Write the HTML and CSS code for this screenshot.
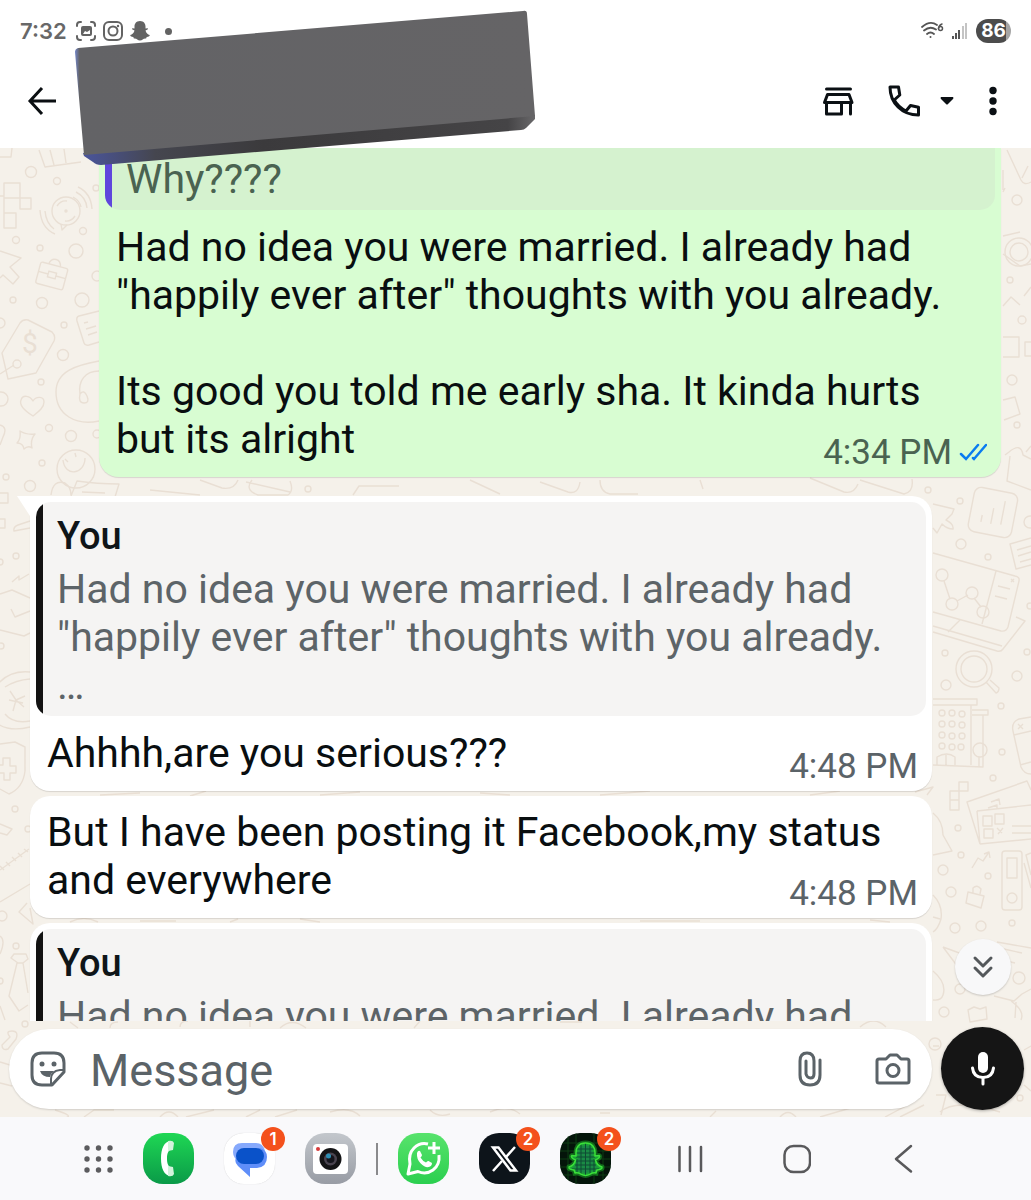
FILE: index.html
```html
<!DOCTYPE html>
<html lang="en">
<head>
    <meta charset="UTF-8">
    <meta name="viewport" content="width=device-width, initial-scale=1.0">
    <title>Chat</title>
    <link rel="stylesheet" href="styles.css">
</head>
<body>
    <header class="header">
        <div class="status-bar">
            <span class="clock">7:32</span>
            <div class="status-left">
                <svg width="22" height="22" viewBox="0 0 22 22" fill="none" stroke="#636363" stroke-width="2" stroke-linecap="round">
                    <path d="M2 6V5q0-3 3-3h1M16 2h1q3 0 3 3v1M20 16v1q0 3-3 3h-1M6 20H5q-3 0-3-3v-1"/>
                    <rect x="6" y="6" width="11" height="10" rx="2" fill="#636363" stroke="none"/>
                    <path d="M8 14l2-3 2 1 3-2v4z" fill="#fff" stroke="none"/>
                </svg>
                <svg width="22" height="22" viewBox="0 0 22 22" fill="none" stroke="#636363" stroke-width="2">
                    <rect x="2" y="2" width="18" height="18" rx="5"/>
                    <circle cx="11" cy="11" r="4.5"/>
                    <circle cx="16" cy="6" r="1.2" fill="#636363" stroke="none"/>
                </svg>
                <svg width="22" height="22" viewBox="0 0 22 22" fill="#636363">
                    <path d="M11 1c4 0 5.500 3 5.500 5.500v2l2-.3c1 .3.600 1.300-2 2.300.6 2.500 2.300 4 4.200 4.500.5.800-1 1.700-3 2l-.6 1.600c-3-.4-3.500 1.900-6.100 1.900s-3.100-2.300-6.100-1.900L4.300 17c-2-.3-3.500-1.200-3-2 1.900-.5 3.600-2 4.200-4.500-2.600-1-3-2-2-2.300l2 .3v-2C5.500 4 7 1 11 1z"/>
                </svg>
                <span class="more-dot"></span>
            </div>
            <div class="status-right">
                <svg width="24" height="20" viewBox="0 0 24 20" fill="none" stroke="#555" stroke-width="1.8" stroke-linecap="round">
                    <path d="M2 6q8-7 15-2M4 9.500q6-5 12-1M7 13q3.500-3 7 0"/>
                    <circle cx="10.500" cy="16" r="1" fill="#555" stroke="none"/>
                    <path d="M22 3q-3 1-3.500 4.500" stroke-width="1.500"/>
                    <circle cx="20.500" cy="7.500" r="2" stroke-width="1.500"/>
                </svg>
                <svg width="16" height="18" viewBox="0 0 16 18" fill="#555">
                    <rect x="0" y="14" width="2" height="3"/>
                    <rect x="3" y="11" width="2" height="6"/>
                    <rect x="6" y="8" width="2" height="9"/>
                    <rect x="10" y="4" width="2" height="13" fill="#c4c4c4"/>
                    <rect x="13" y="1" width="2" height="16" fill="#c4c4c4"/>
                </svg>
                <span class="battery">86</span>
            </div>
        </div>
        <div class="toolbar">
            <button class="icon-btn" aria-label="Back">
                <svg width="30" height="30" viewBox="0 0 30 30" fill="none" stroke="#0b0f12" stroke-width="3">
                    <path d="M29 15H4M15 2L3 15l12 13"/>
                </svg>
            </button>
            <div class="toolbar-actions">
                <button class="icon-btn" aria-label="Catalogue">
                    <svg width="32" height="32" viewBox="0 0 32 32" fill="none" stroke="#0b1014" stroke-width="3" stroke-linecap="round" stroke-linejoin="round">
                        <path d="M4.500 4h24M5.500 9.500h21.500l3 8H2.500zM4.500 18v11h15V18M28.500 18v11"/>
                    </svg>
                </button>
                <div class="call-group">
                    <button class="icon-btn" aria-label="Call">
                        <svg width="32" height="32" viewBox="0 0 32 32" fill="none" stroke="#0b1014" stroke-width="3" stroke-linejoin="round">
                            <path d="M2 2h8.500l1.300 8-5.600 5C9 20 13 23.500 18 26l4.500-5.500 8 1.700V30C14 30 2 18 2 2z"/>
                        </svg>
                    </button>
                    <button class="icon-btn" aria-label="Call options">
                        <svg width="16" height="12" viewBox="0 0 16 12"><path d="M2 2h12q1 1 0 2l-5 5q-1 1-2 0L2 4Q1 3 2 2z" fill="#0b1014"/></svg>
                    </button>
                </div>
                <button class="icon-btn" aria-label="Menu">
                    <svg width="8" height="30" viewBox="0 0 8 30" fill="#0b1014">
                        <circle cx="4" cy="4.500" r="3.700"/><circle cx="4" cy="15" r="3.700"/><circle cx="4" cy="25.500" r="3.700"/>
                    </svg>
                </button>
            </div>
        </div>
        <svg class="cover" width="470" height="160" viewBox="70 8 470 160">
            <defs>
                <linearGradient id="side" x1="0" x2="1" y1="0" y2="0">
                    <stop offset="0" stop-color="#4a559c"/>
                    <stop offset=".16" stop-color="#45464f"/>
                    <stop offset=".4" stop-color="#3b3a3c"/>
                    <stop offset=".94" stop-color="#454446"/>
                    <stop offset="1" stop-color="#69686a"/>
                </linearGradient>
                <linearGradient id="face" x1="0" x2="1" y1="0" y2="0">
                    <stop offset="0" stop-color="#7286c8"/>
                    <stop offset=".01" stop-color="#636366"/>
                    <stop offset="1" stop-color="#656466"/>
                </linearGradient>
            </defs>
            <path d="M83 153l452-38v4l-9 9q-2 2-5 2L101 165q-5 0-8-3l-9-6z" fill="url(#side)"/>
            <path d="M78 48L523 11q4-1 4 3l8 102L84 155 75 52q0-3 3-4z" fill="url(#face)"/>
        </svg>
    </header>

    <main class="chat">
        <svg class="wallpaper" viewBox="0 148 1031 969" preserveAspectRatio="xMidYMin slice" aria-hidden="true">
            <!-- left side -->
            <path d="M0 157h11l1-9M39 150l6 17 36-5M50 150l4 15M64 149l2 14M4 183h16v15h11v11H20v-11H4zM4 198v15h12v15H4zM0 196h4"/>
            <circle cx="66" cy="211" r="14"/><circle cx="66" cy="211" r="1"/>
            <path d="M57 206q4-6 10-5M75 216q-4 6-10 5M61 224l1 6 5-5M78 187q13 6 14 22M76 192q10 5 11 16M73 197q7 4 8 10M40 210q1 18 15 24M45 211q1 12 9 18"/>
            <path d="M0 251l21 7-11 9 9 10-6 7-10-9-3 3"/>
            <g transform="rotate(15 52 275)"><rect x="38" y="265" width="28" height="22" rx="2"/><path d="M46 265q1-6 6-6t6 6M38 275h10M56 275h10"/><rect x="48" y="272" width="8" height="6"/></g>
            <path d="M28 320l24 12q4 4 2 9l-18 32-28 6-6-26 18-30q3-4 8-3zM0 374l14-9"/>
            <circle cx="17" cy="364" r="4"/>
            <text x="22" y="353">$</text>
            <path d="M99 311l-20 5q-3 1-2 5l7 22q1 3 5 2l10-3M84 323l4-1M86 329l10-3M88 335l9-3"/>
            <path d="M99 361c-22 4-43 10-43 31 0 23 20 34 43 29M99 371c-14 0-21 10-19 23M80 394q4-5 7 2t-3 7-4-9"/>
            <path d="M33 416c-8-5-14-11-12-16 2-6 9-4 12 1 3-5 11-5 11 1s-6 10-11 14z"/>
            <path d="M20 431q6 4 15 3-5 6-3 14-4-3-8 1-1-6-7-6 4-4 3-12zM0 425q8 2 3 12l-3 8"/>
            <circle cx="76" cy="469" r="19"/><path d="M63 460c2 18 22 14 22-2M65 459l3 3M75 453l1 4"/>
            <path d="M51 495q2-16 14-12 6 4 6 12M71 496l6-15q20 3 42 3l-4 13M82 492l23 1M0 493h8v10H0M0 519h5v9H0M30 521l-12 4q-5 2-4 6l16-3"/>
            <path d="M12 582l7-6v4l10-6M0 594l12-4 18 8M11 609l4 8 15-6M0 630l24 6 6-3"/>
            <path d="M30 672Q10 670-2 684M-2 724q12 8 32 3M30 679Q16 680 5 687M5 714q8 10 25 7M10 691l6 9 9-4M16 700l-3 11M16 700l8 7M9 700l14 3"/>
            <path d="M0 744l15-2 10 5v24q-2 17-16 23l-9-5M0 765h3v-7h7v8h6v7h-6v7H4v-7H0"/>
            <path d="M0 824l12 5-5 6-7-2M0 870l29-21M0 902l30-18M0 866l4 4M6 862l4 4M12 857l4 4M18 853l4 4M24 849l4 3M27 903l-8 9 14 12-3-16M11 958l3-4h12l2 5-5 4h-5zM17 963l-8 33 10 15 9-6M23 963l5 30M0 1006l5 14M0 936q6 4 0 18M10 1037q-5-6 2-6t4 8l-8 10q-6 2-6-4zM0 1062l10 3M0 1083l12 3"/>
            <!-- gaps between bubbles -->
            <path d="M150 490l50 5M200 480l22 8q12 2 16-8M246 482l44 10M252 480q-8 10 6 15h30q6-4 2-14M353 495l6-9h40M470 480l30 14M540 482l28 10q10 3 12-10M600 480q0 12 10 14h28M810 478l34 14q10 2 14-8M860 480l44 14q10-2 8-15M700 480l3 9"/>
            <path d="M100 795l40-2M190 796l16-5M320 795l40-3M480 793l30 2M600 795l50-4M810 795l30-4M915 792l18-5-6 8M70 922q14-7 28 0M140 921h36M230 922l8-3M300 919l20 3M640 921h60M870 920l20 2"/>
            <path d="M70 1022l8 6M110 1028q0-6 8-6M180 1027q0-6 8-6M250 1021v6M280 1028q12-11 26 0M420 1021l-6 7M560 1022h22M860 1027q14-12 26 0"/>
            <path d="M55 1110q20 6 10 8M84 1117l10-7h20M186 1117l28-7M160 1117q9-10 18 0M260 1110l-14 7M275 1117l22-7M330 1112q20-6 30 4M430 1110q8 8 20 4M490 1112q18-8 30 2M600 1113h10M710 1117l6-6M780 1117q8-9 16 0M820 1117l34-10M885 1117l30-16M900 1117l24-12M940 1112q16-14 60 0"/>
            <!-- right side -->
            <path d="M1007 150l14 30q3 6 10 2M1022 178l6-12M1003 170v20M1005 188l-2 4M1003 236l17-4M1003 254l17 12 11-2M1024 296l7-9M1003 306l8-9 9 8M1003 337h16v20h-16M1031 342h-6v14h6M1003 400l12-3 5 17-16 6M1005 455l4-3q12-10 14 3l8 4M1010 456l-3 25 24 9M1031 446l-5 6"/>
            <circle cx="1019" cy="252" r="14"/><circle cx="1019" cy="252" r="9"/>
            <path d="M933 504l21 5-2 5-6 6q8 4 7 9-6 0-11-5l-5 9-4-5"/>
            <g transform="rotate(11 993 512)"><rect x="971" y="490" width="44" height="45" rx="7"/><path d="M983 517v7M993 508v16M1003 499v24"/></g>
            <path d="M1031 538l-21 6 6 25 15-4M1017 550l14-4M1018 556l13-4M1020 562l11-3"/>
            <path d="M933 553l82 23q5 1 4 5l-11 46q-2 5-7 4L933 612M996 571l-14 53M998 586l12 3M995 596l12 3M1011 579l3 3M1014 579l-3 3M1016 617l9 4-22 28q-2 3-6 2L933 632M1002 646L933 626M960 620l-12 12"/>
            <path d="M944 581l6 18M957 601l11-6M974 598l7 9"/>
            <path d="M986 682l10 11q3-1 3-5l-9-8"/>
            <circle cx="974" cy="669" r="18"/><circle cx="974" cy="669" r="13"/>
            <path d="M933 699h44v6h-44M971 705v60M933 765l50 2v-52M972 710h16v5h-16M937 765v-8q10-6 18 0v8M946 755v10M979 757v10"/>
            <g>
                <circle cx="942" cy="713" r="3"/><circle cx="952" cy="713" r="3"/><circle cx="962" cy="714" r="3"/>
                <circle cx="942" cy="724" r="3"/><circle cx="952" cy="724" r="3"/><circle cx="962" cy="725" r="3"/>
                <circle cx="942" cy="735" r="3"/><circle cx="952" cy="736" r="3"/><circle cx="962" cy="736" r="3"/>
                <circle cx="942" cy="746" r="3"/><circle cx="952" cy="747" r="3"/><circle cx="961" cy="747" r="3"/>
                <circle cx="980" cy="750" r="7"/>
            </g>
            <path d="M1031 717l-12 2q-8 3-6 12l8 36q3 7 10 7M1014 735l17-4M1020 765l11-3M1018 724l5 5M1023 724l-5 5"/>
            <path d="M959 782h9v9h-9zM950 791h9v9h-9zM950 800h9v10h-9z"/>
            <path d="M980 844l-13-42 60-21 4 9M980 844l51-5M977 811l54-6M977 811l3 33M983 816h9v10h-9zM995 814h9v10h-9zM984 829h9v9h-9zM997 828l5 5M1003 828l-5 6M1012 826h19M1012 833h19M988 808l9-3v5M991 802l8-3 1 6"/>
            <path d="M933 813q10 8 10 22l9 16-19 4M972 868l6-10 5 3 6-9M984 854l5-2 1 6"/>
            <rect x="1002" y="851" width="20" height="59" rx="3"/><rect x="1007" y="858" width="10" height="20"/><circle cx="1012" cy="898" r="5"/>
            <path d="M1031 853l-5 2 5 20M1024 863l7 25"/>
            <path d="M968 892l16 4-3 12-15-5zM973 893v-5q4-4 8 1l-1 5M933 895q10 10 8 24-3 10-8 13M933 917l7 2M943 947l30 11M943 947l18 24 12 16M997 942l34 6M1004 949l18 4M1003 960l12 3M994 996l20 5 8-7 9-5M1011 1001q14 10 10 19M1016 1002l-1 16M933 971q14 12 10 24-2 6-10 5M968 1010l6-3 6 2 6-2 1 12-17 3z"/>
            <path d="M933 1046h6M1024 1050l7-4M936 1095h10l-5 20M1024 1085l7 6"/>
            <!-- loose bubbles -->
            <g>
                <circle cx="31" cy="172" r="5.500"/><circle cx="57" cy="181" r="3.500"/><circle cx="96" cy="188" r="3"/>
                <circle cx="83" cy="231" r="3.500"/><circle cx="16" cy="240" r="3.500"/><circle cx="40" cy="248" r="3"/>
                <circle cx="76" cy="251" r="7"/><circle cx="13" cy="300" r="3"/><circle cx="42" cy="303" r="5.500"/>
                <circle cx="82" cy="300" r="7"/><circle cx="64" cy="325" r="3"/><circle cx="63" cy="355" r="5.500"/>
                <circle cx="97" cy="276" r="5"/><circle cx="0" cy="323" r="5"/><circle cx="41" cy="382" r="3"/>
                <circle cx="1" cy="399" r="7"/><circle cx="49" cy="428" r="3.500"/><circle cx="71" cy="436" r="5.500"/>
                <circle cx="97" cy="434" r="4"/><circle cx="42" cy="463" r="3"/><circle cx="6" cy="477" r="3"/>
                <circle cx="30" cy="486" r="5.500"/><circle cx="308" cy="489" r="3"/><circle cx="0" cy="562" r="3"/>
                <circle cx="16" cy="556" r="3"/><circle cx="1" cy="646" r="3"/><circle cx="15" cy="809" r="3"/>
                <circle cx="28" cy="829" r="3"/><circle cx="2" cy="916" r="5"/><circle cx="16" cy="946" r="3"/>
                <circle cx="0" cy="981" r="3"/><circle cx="25" cy="1024" r="3"/>
                <circle cx="1017" cy="200" r="5"/><circle cx="1010" cy="280" r="3"/><circle cx="1022" cy="320" r="4"/>
                <circle cx="1012" cy="380" r="5"/><circle cx="1017" cy="425" r="3"/><circle cx="928" cy="490" r="3"/>
                <circle cx="960" cy="501" r="3"/><circle cx="961" cy="544" r="5"/><circle cx="988" cy="557" r="3"/>
                <circle cx="942" cy="575" r="6"/><circle cx="952" cy="604" r="6"/><circle cx="972" cy="593" r="6"/>
                <circle cx="983" cy="612" r="6"/><circle cx="1030" cy="522" r="6"/><circle cx="1030" cy="606" r="3"/>
                <circle cx="945" cy="653" r="3"/><circle cx="1027" cy="652" r="3"/><circle cx="1017" cy="676" r="5"/>
                <circle cx="946" cy="685" r="5"/><circle cx="1001" cy="706" r="3"/><circle cx="1002" cy="752" r="3"/>
                <circle cx="993" cy="778" r="3"/><circle cx="958" cy="828" r="3"/><circle cx="961" cy="855" r="3"/>
                <circle cx="943" cy="870" r="5"/><circle cx="988" cy="876" r="3"/><circle cx="951" cy="892" r="5"/>
                <circle cx="955" cy="928" r="5"/><circle cx="981" cy="926" r="5"/><circle cx="1012" cy="923" r="3"/>
                <circle cx="1019" cy="978" r="6"/><circle cx="960" cy="989" r="5"/><circle cx="944" cy="1012" r="5"/>
                <circle cx="935" cy="1044" r="6"/><circle cx="1020" cy="1098" r="3"/>
            </g>
        </svg>

        <div class="thread">
            <div class="bubble sent">
                <div class="quote">
                    <p class="quote-text">Why????</p>
                </div>
                <div class="bubble-body">
                    <p class="text">Had no idea you were married. I already had<br>"happily ever after" thoughts with you already.<br><br>Its good you told me early sha. It kinda hurts<br>but its alright</p>
                    <div class="meta">
                        <span>4:34 PM</span>
                        <svg width="28" height="20" viewBox="0 0 28 20" fill="none" stroke="#0a7cf0" stroke-width="2.500" stroke-linecap="round">
                            <path d="M2 11l5 5L19 2M14 15l1 1L27 2"/>
                        </svg>
                    </div>
                </div>
            </div>

            <div class="bubble received quoted with-tail">
                <div class="quote">
                    <p class="quote-name">You</p>
                    <p class="quote-text">Had no idea you were married. I already had<br>"happily ever after" thoughts with you already.<br>…</p>
                </div>
                <div class="bubble-body">
                    <p class="text">Ahhhh,are you serious???</p>
                    <div class="meta"><span>4:48 PM</span></div>
                </div>
            </div>

            <div class="bubble received">
                <div class="bubble-body">
                    <p class="text">But I have been posting it Facebook,my status<br>and everywhere</p>
                    <div class="meta"><span>4:48 PM</span></div>
                </div>
            </div>

            <div class="bubble received quoted">
                <div class="quote">
                    <p class="quote-name">You</p>
                    <p class="quote-text">Had no idea you were married. I already had</p>
                </div>
            </div>
        </div>

        <button class="scroll-down" aria-label="Scroll to bottom">
            <svg width="22" height="26" viewBox="0 0 22 26" fill="none" stroke="#54585b" stroke-width="3" stroke-linecap="round" stroke-linejoin="round">
                <path d="M3 4l8 8 8-8M3 14l8 8 8-8"/>
            </svg>
        </button>

        <form class="composer">
            <div class="composer-box">
                <button type="button" class="icon-btn" aria-label="Stickers">
                    <svg width="36" height="36" viewBox="0 0 36 36" fill="none" stroke="#5b6368" stroke-width="3" stroke-linejoin="round">
                        <path d="M12 2h12q10 0 10 10v9L22 34H12Q2 34 2 24V12Q2 2 12 2z"/>
                        <path d="M34 19h-4q-9 1-9 9v6" stroke-width="2"/>
                        <circle cx="12" cy="13" r="2.500" fill="#5b6368" stroke="none"/>
                        <circle cx="24" cy="13" r="2.500" fill="#5b6368" stroke="none"/>
                        <path d="M10 20h14q-3 2-4 6-8 0-10-6z" fill="#5b6368" stroke="none"/>
                    </svg>
                </button>
                <input class="composer-input" type="text" placeholder="Message" aria-label="Message">
                <button type="button" class="icon-btn" aria-label="Attach">
                    <svg width="24" height="36" viewBox="0 0 24 36" fill="none" stroke="#5b6368" stroke-width="3" stroke-linecap="round">
                        <path d="M22 9v15q0 10-10 10T2 24V10q0-8 7-8t7 8v13q0 4-3.500 4T8 23V10"/>
                    </svg>
                </button>
                <button type="button" class="icon-btn" aria-label="Camera">
                    <svg width="36" height="34" viewBox="0 0 36 34" fill="none" stroke="#5b6368" stroke-width="3" stroke-linejoin="round">
                        <path d="M4 7h7l4-4h7l4 4h6q2 0 2 2v20q0 2-2 2H4q-2 0-2-2V9q0-2 2-2z"/>
                        <circle cx="18" cy="18.500" r="6"/>
                    </svg>
                </button>
            </div>
            <button type="button" class="mic-btn" aria-label="Record">
                <svg width="26" height="36" viewBox="0 0 26 36">
                    <rect x="8" y="1" width="10" height="21" rx="5" fill="#fff"/>
                    <path d="M2.500 17q1 9.500 10.500 9.500T23.500 17M13 27v6" fill="none" stroke="#fff" stroke-width="3" stroke-linecap="round"/>
                </svg>
            </button>
        </form>
    </main>

    <nav class="dock">
        <div class="dock-apps">
            <button class="icon-btn" aria-label="All apps">
                <svg width="29" height="30" viewBox="0 0 29 30" fill="#5c5c5e">
                    <circle cx="3" cy="4" r="2.700"/><circle cx="14.500" cy="4" r="2.700"/><circle cx="26" cy="4" r="2.700"/>
                    <circle cx="3" cy="15" r="2.700"/><circle cx="14.500" cy="15" r="2.700"/><circle cx="26" cy="15" r="2.700"/>
                    <circle cx="3" cy="26" r="2.700"/><circle cx="14.500" cy="26" r="2.700"/><circle cx="26" cy="26" r="2.700"/>
                </svg>
            </button>
            <button class="app app-phone" aria-label="Phone">
                <svg width="51" height="51" viewBox="0 0 51 51">
                    <path d="M28 8c-7 0-10 8-10 17.500S21 43 28 43l1-8c-4-1-5-5-5-9.500s1-8.500 5-9.500z" fill="#fff"/>
                    <path d="M25 8q5-1 6 2l-1 7-5 1zM25 43q5 1 6-2l-1-7-5-1z" fill="#d3f3dc"/>
                </svg>
            </button>
            <button class="app app-messages" aria-label="Messages">
                <svg width="51" height="51" viewBox="0 0 51 51">
                    <path d="M18 10h14q7 0 9 8l-3 10H16q-7-2-7-9 0-9 9-9z" fill="#86a9fc"/>
                    <path d="M36 15q7 2 7 9 0 10-10 11h-7v9l-12-11q-4-4-2-8z" fill="#5f8ef9"/>
                    <rect x="12" y="15" width="28" height="16" rx="8" fill="#0a52c9"/>
                </svg>
                <span class="badge">1</span>
            </button>
            <button class="app app-camera" aria-label="Camera">
                <svg width="51" height="51" viewBox="0 0 51 51">
                    <rect x="8" y="11" width="35" height="30" rx="4" fill="#fff"/>
                    <circle cx="13" cy="16" r="2" fill="#d63a3a"/>
                    <circle cx="25.500" cy="26" r="11" fill="#141416"/>
                    <circle cx="25.500" cy="26" r="6.500" fill="#4a4450"/>
                    <circle cx="25.500" cy="26" r="4" fill="#15151c"/>
                    <circle cx="23.500" cy="23" r="2.500" fill="#2b8fb5"/>
                </svg>
            </button>
        </div>
        <span class="dock-divider"></span>
        <div class="dock-apps">
            <button class="app app-whatsapp" aria-label="WhatsApp">
                <svg width="51" height="51" viewBox="0 0 51 51" fill="none" stroke="#fff" stroke-width="3">
                    <path d="M30 11q-8-2-14 4T12 31l-2 10 10-2.500q8 3.500 15-1.500t6-15" stroke-linejoin="round"/>
                    <path d="M36 9v12M30 15h12"/>
                    <path d="M19 20q1-3 3-2l2 4q0 1-1.500 2.500 2 3.500 5.500 5 1.500-2 2.500-1.500l3.500 2q0 4-4.500 4.200-3 0-7-4t-3.500-10.200z" fill="#fff" stroke="none"/>
                </svg>
            </button>
            <button class="app app-x" aria-label="X">
                <svg width="51" height="51" viewBox="0 0 51 51" fill="none" stroke="#fff">
                    <path d="M14 14.500h5.500L37 37.500h-5.500z" stroke-width="2.500"/>
                    <path d="M36 14L27 24M23 28l-9 10" stroke-width="2.500"/>
                </svg>
                <span class="badge">2</span>
            </button>
            <button class="app app-snap" aria-label="Snapchat">
                <svg width="51" height="51" viewBox="0 0 51 51" fill="none">
                    <path d="M0 10h51M0 18h51M0 26h51M0 34h51M0 42h51M8 0v51M16 0v51M34 0v51M43 0v51" stroke="#0c3d12"/>
                    <path d="M25.500 10c7 0 9.500 5 9.500 9.500v3.500l4-.5c2 1-1 3.500-3.500 4.500 1 4 3 6 6.500 7 .5 2-2 2.500-5 3l-1 3c-5-1-6 2.500-10.500 2.500S20 39 15 40l-1-3c-3-.5-5.500-1-5-3 3.500-1 5.500-3 6.500-7-2.500-1-5.500-3.500-3.500-4.500l4 .5v-3.500c0-4.500 2.500-9.500 9.500-9.500z" fill="#1a8a45" stroke="#1bb52a" stroke-width="5" stroke-opacity=".5"/>
                    <path d="M17 16h17M16 20h19M16 24h19M16 28h19M15 32h21M12 36h27M21 11v30M25.500 10v32M30 11v30M17 26v13M34 26v13" stroke="#0f4a35"/>
                    <path d="M25.500 10c7 0 9.500 5 9.500 9.500v3.500l4-.5c2 1-1 3.500-3.500 4.500 1 4 3 6 6.500 7 .5 2-2 2.500-5 3l-1 3c-5-1-6 2.500-10.500 2.500S20 39 15 40l-1-3c-3-.5-5.500-1-5-3 3.500-1 5.500-3 6.500-7-2.500-1-5.500-3.500-3.500-4.500l4 .5v-3.500c0-4.500 2.500-9.500 9.500-9.500z" stroke="#3be03a" stroke-width="1.500"/>
                </svg>
                <span class="badge">2</span>
            </button>
        </div>
        <div class="dock-keys">
            <button class="icon-btn" aria-label="Recents">
                <svg width="28" height="30" viewBox="0 0 28 30" stroke="#59595b" stroke-width="2.500" stroke-linecap="round"><path d="M3.500 3v24M14 3v24M25 3v24"/></svg>
            </button>
            <button class="icon-btn" aria-label="Home">
                <svg width="28" height="30" viewBox="0 0 28 30" fill="none" stroke="#59595b" stroke-width="2.500"><rect x="1.500" y="2" width="25.500" height="26" rx="9"/></svg>
            </button>
            <button class="icon-btn" aria-label="Back">
                <svg width="28" height="30" viewBox="0 0 28 30" fill="none" stroke="#59595b" stroke-width="2.500" stroke-linecap="round" stroke-linejoin="round"><path d="M21 2L6 15l15 12.500"/></svg>
            </button>
        </div>
    </nav>
</body>
</html>
```
FILE: styles.css
```css
* {
    box-sizing: border-box;
}
body {
    margin: 0;
    height: 100vh;
    display: flex;
    flex-direction: column;
    overflow: hidden;
    font-family: Roboto, "Liberation Sans", sans-serif;
    background-color: #fff;
}
p {
    margin: 0;
}
svg {
    display: block;
}
button {
    font-family: inherit;
    cursor: pointer;
}
.icon-btn {
    border: none;
    background: none;
    padding: 0;
    flex: none;
}

/* header */
.header {
    position: relative;
    z-index: 2;
    padding-bottom: 8px;
    background-color: #fff;
}
.status-bar {
    display: flex;
    align-items: center;
    height: 62px;
    padding: 0 20px;
    font-family: Inter, sans-serif;
}
.clock {
    font-size: 22px;
    font-weight: 600;
    color: #686868;
}
.status-left {
    display: flex;
    align-items: center;
    gap: 5px;
    margin-left: 8px;
}
.more-dot {
    width: 7px;
    height: 7px;
    margin-left: 9px;
    border-radius: 50%;
    background-color: #636363;
}
.status-right {
    display: flex;
    align-items: center;
    gap: 8px;
    margin-left: auto;
}
.battery {
    width: 35px;
    border-radius: 12px;
    background: linear-gradient(to right, #4c4c4c 86%, #a5a5a5 86%);
    color: #fff;
    font-size: 19px;
    font-weight: 700;
    line-height: 24px;
    text-align: center;
}
.toolbar {
    display: flex;
    align-items: center;
    justify-content: space-between;
    height: 78px;
    padding: 0 34px 0 27px;
}
.toolbar-actions {
    display: flex;
    align-items: center;
    gap: 34px;
}
.call-group {
    display: flex;
    align-items: center;
    gap: 19px;
}
.cover {
    position: absolute;
    top: 8px;
    left: 70px;
}

/* chat */
.chat {
    position: relative;
    flex: 1;
    min-height: 0;
    display: flex;
    flex-direction: column;
    background-color: #f5f1ea;
}
.wallpaper {
    position: absolute;
    inset: 0;
    width: 100%;
    height: 100%;
    fill: none;
    stroke: #e9dfd4;
    stroke-width: 1.4;
    stroke-linejoin: round;
}
.wallpaper text {
    font-size: 28px;
    fill: #e9dfd4;
    stroke: none;
}
.thread {
    position: relative;
    flex: 1;
    min-height: 0;
    overflow: hidden;
    display: flex;
    flex-direction: column;
    gap: 5px;
    padding: 0 30px;
}
.bubble {
    position: relative;
    flex: none;
    width: calc(100% - 69px);
    border-radius: 20px;
    box-shadow: 0 1px 1px rgba(0, 0, 0, 0.12);
}
.sent {
    align-self: flex-end;
    margin-bottom: 14px;
    border-radius: 0 0 20px 20px;
    background-color: #d8fdd2;
}
.received {
    background-color: #fff;
}
.quoted {
    padding-top: 6px;
}
.with-tail::before {
    content: "";
    position: absolute;
    top: 0;
    left: -13px;
    width: 34px;
    height: 20px;
    background-color: #fff;
    clip-path: polygon(0 0, 100% 0, 100% 100%, 13px 100%);
}
.quote {
    position: relative;
    margin: 0 6px 1px;
    padding: 10px 14px 7px 21px;
    border-radius: 15px;
    background: linear-gradient(to right, #131313 7px, #f5f4f3 7px);
}
.sent .quote {
    padding-top: 7px;
    border-radius: 0 0 15px 15px;
    background: linear-gradient(to right, #5f47dc 7px, #d5f2cf 7px);
}
.quote-name {
    margin-bottom: 5px;
    font-size: 38px;
    font-weight: 500;
    line-height: 48px;
    color: #0f1518;
}
.quote-text {
    font-size: 41px;
    line-height: 48px;
    color: #5d6468;
}
.sent .quote-text,
.sent .meta {
    color: #4a6351;
}
.bubble-body {
    display: grid;
    padding: 12px 14px 14px 17px;
}
.text,
.meta {
    grid-area: 1 / 1;
}
.text {
    font-size: 41px;
    line-height: 48px;
    color: #090e10;
}
.meta {
    display: flex;
    align-items: center;
    align-self: end;
    justify-self: end;
    gap: 7px;
    margin-bottom: -10px;
    font-size: 35px;
    line-height: 41px;
    color: #5b6368;
}
.scroll-down {
    position: absolute;
    right: 20px;
    bottom: 122px;
    display: flex;
    align-items: center;
    justify-content: center;
    width: 56px;
    height: 56px;
    border: none;
    border-radius: 50%;
    background-color: #f8f8f9;
    box-shadow: 0 1px 2px rgba(0, 0, 0, 0.18);
}

/* composer */
.composer {
    position: relative;
    display: flex;
    align-items: center;
    gap: 9px;
    padding: 6px 7px 7px 9px;
}
.composer-box {
    flex: 1;
    min-width: 0;
    display: flex;
    align-items: center;
    height: 80px;
    padding: 0 21px;
    border-radius: 40px;
    background-color: #fff;
    box-shadow: 0 1px 2px rgba(0, 0, 0, 0.15);
}
.composer-input {
    flex: 1;
    min-width: 0;
    margin: 0 24px;
    padding: 3px 0 0;
    border: none;
    outline: none;
    background: none;
    font-family: inherit;
    font-size: 45px;
    color: #090e10;
}
.composer-input::placeholder {
    color: #5b6368;
    opacity: 1;
}
.composer-box .icon-btn:last-child {
    margin-left: 53px;
}
.mic-btn {
    display: flex;
    align-items: center;
    justify-content: center;
    width: 83px;
    height: 83px;
    border: none;
    border-radius: 50%;
    background-color: #151515;
    box-shadow: 0 1px 3px rgba(0, 0, 0, 0.3);
}

/* dock */
.dock {
    display: flex;
    align-items: center;
    height: 83px;
    padding-left: 84px;
    background-color: #f9f9fb;
}
.dock-apps {
    display: flex;
    align-items: center;
    gap: 30px;
}
.dock-divider {
    width: 2px;
    height: 32px;
    margin: 0 20px;
    background-color: #8a8a8c;
}
.app {
    position: relative;
    width: 51px;
    height: 51px;
    padding: 0;
    border: none;
    border-radius: 20px;
}
.app-phone {
    background: linear-gradient(#1fd754, #0a9a48);
}
.app-messages {
    background: #fff;
    box-shadow: 0 0 1px rgba(0, 0, 0, 0.2);
}
.app-camera {
    background: linear-gradient(#c3c7cc, #989ca4);
}
.app-whatsapp {
    background: linear-gradient(#58e36c, #2bcf4f);
}
.app-x {
    background: #0d141a;
}
.app-snap {
    background: #04150a;
}
.app-snap svg {
    border-radius: 20px;
}
.badge {
    position: absolute;
    top: -6px;
    right: -10px;
    width: 24px;
    height: 24px;
    border-radius: 50%;
    background-color: #f4511c;
    color: #fff;
    font-family: Inter, sans-serif;
    font-size: 17px;
    font-weight: 600;
    line-height: 24px;
    text-align: center;
}
.dock-keys {
    display: flex;
    align-items: center;
    gap: 79px;
    margin-left: 65px;
}
```
